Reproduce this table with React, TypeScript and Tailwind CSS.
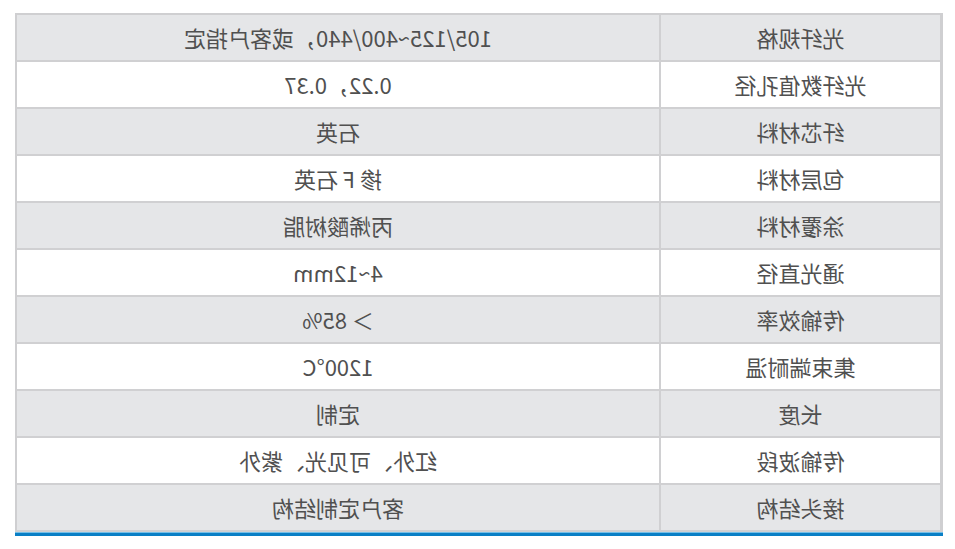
const rows: [string, string][] = [
  ["光纤规格", "105/125~400/440，或客户指定"],
  ["光纤数值孔径", "0.22，0.37"],
  ["纤芯材料", "石英"],
  ["包层材料", "掺 F 石英"],
  ["涂覆材料", "丙烯酸树脂"],
  ["通光直径", "4~12mm"],
  ["传输效率", "＞ 85%"],
  ["集束端耐温", "1200°C"],
  ["长度", "定制"],
  ["传输波段", "红外、可见光、紫外"],
  ["接头结构", "客户定制结构"],
];

export default function App() {
  return (
    <div className="h-[549px] w-[955px] bg-white [transform:scaleX(-1)]">
      <div className="ml-[12px] pt-[13px]">
        <div className="w-[928px] border-t-2 border-r-2 border-l-[3px] border-[#cfcfd1] font-['Noto_Sans_CJK_SC','Noto_Sans',sans-serif] text-[22px] text-[#505050]">
          {rows.map(([label, value], i) => (
            <div
              key={label}
              className={
                "grid h-[47px] grid-cols-[281px_1fr] border-b-2 border-[#d0d0d2] " +
                (i % 2 === 0 ? "bg-[#e5e6e8]" : "bg-white")
              }
            >
              <div className="flex items-center justify-center border-r-2 border-[#d0d0d2]">{label}</div>
              <div className="flex items-center justify-center">{value}</div>
            </div>
          ))}
        </div>
        <div className="w-[928px] border-t border-[#74bfe8] bg-[#0a7fc5] h-[4px]" />
      </div>
    </div>
  );
}
